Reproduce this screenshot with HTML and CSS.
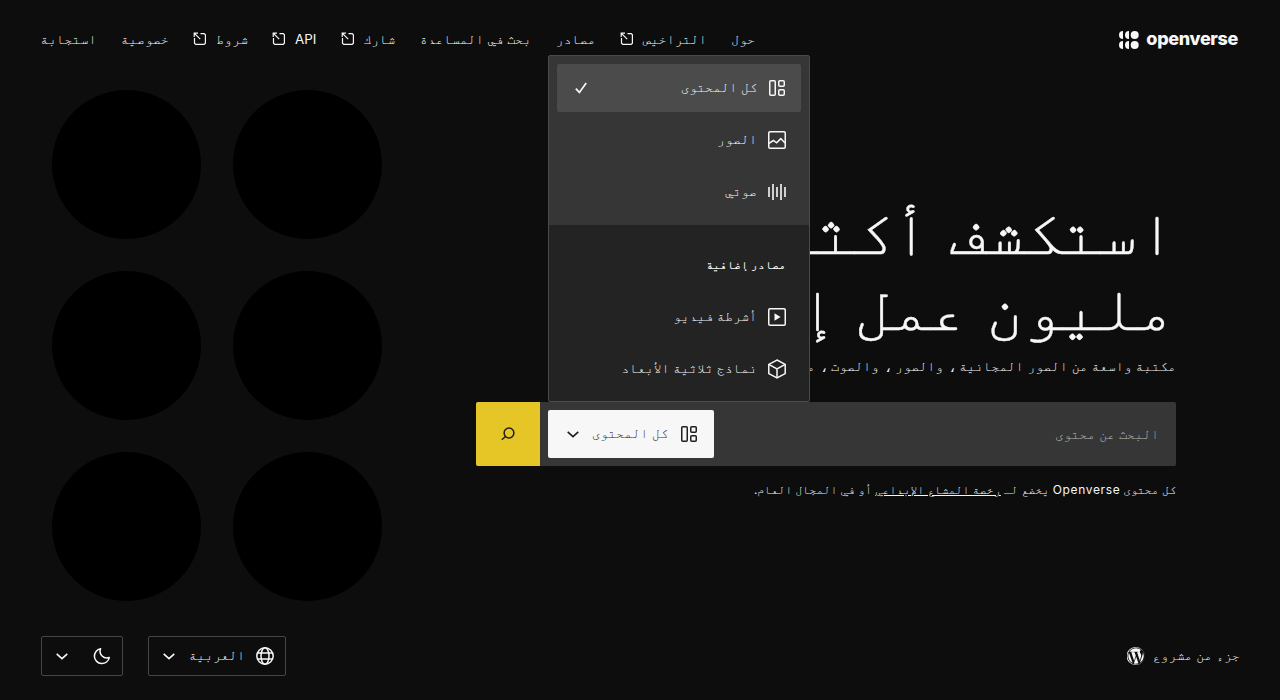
FILE: index.html
```html
<!DOCTYPE html>
<html lang="ar" dir="rtl">
<head>
<meta charset="utf-8">
<title>Openverse</title>
<link rel="stylesheet" href="styles.css">
</head>
<body>
<svg class="defs" width="0" height="0">
  <symbol id="ext" viewBox="0 0 14 14"><g fill="none" stroke="currentColor" stroke-width="1.2"><path d="M1.5 6V11.2L2.8 12.4H11.2L12.4 11.2V2.8L11.2 1.6H7.5"/><path d="M1.2 5V1.2H5M1.2 1.2L7.2 7.2"/></g></symbol>
  <symbol id="all" viewBox="0 0 18 18"><g fill="none" stroke="currentColor" stroke-width="1.5"><rect x="1.75" y="1.75" width="5.5" height="14.5" rx="1"/><rect x="10.75" y="1.75" width="5.5" height="5.5" rx="1"/><rect x="10.75" y="10.75" width="5.5" height="5.5" rx="1"/></g></symbol>
  <symbol id="down" viewBox="0 0 12 7"><path d="M.7 .8L6 5.6L11.3 .8" fill="none" stroke="currentColor" stroke-width="1.6"/></symbol>
</svg>
<div class="page">
  <header class="header">
    <div class="logo">
      <svg width="20" height="18" viewBox="0 0 20 18" fill="currentColor"><circle cx="15.7" cy="4" r="4"/><circle cx="15.7" cy="14" r="4"/><path d="M4 0V8A4 4 0 0 1 4 0ZM10 0V8A4 4 0 0 1 10 0ZM4 10V18A4 4 0 0 1 4 10ZM10 10V18A4 4 0 0 1 10 10Z"/></svg>
      <span class="wordmark">openverse</span>
    </div>
    <nav class="nav">
      <a>حول</a>
      <a>التراخيص<svg><use href="#ext"/></svg></a>
      <a>مصادر</a>
      <a>بحث في المساعدة</a>
      <a>شارك<svg><use href="#ext"/></svg></a>
      <a>API<svg><use href="#ext"/></svg></a>
      <a>شروط<svg><use href="#ext"/></svg></a>
      <a>خصوصية</a>
      <a>استجابة</a>
    </nav>
  </header>
  <main class="main">
    <section class="hero">
      <h1 class="title">استكشف أكثر من<br>مليون عمل إبداعي</h1>
      <p class="subtitle">مكتبة واسعة من الصور المجانية ، والصور ، والصوت ، متاحة للاستخدام</p>
      <div class="search">
        <div class="field">البحث عن محتوى</div>
        <div class="switcher">
          <svg class="i18"><use href="#all"/></svg><span>كل المحتوى</span><svg class="chev"><use href="#down"/></svg>
          <div class="menu">
            <div class="group primary">
              <div class="item selected"><svg class="i18"><use href="#all"/></svg><span>كل المحتوى</span><svg class="check" viewBox="0 0 12 12"><path d="M.8 6.6L4.4 10.4L11.2 1" fill="none" stroke="currentColor" stroke-width="1.7"/></svg></div>
              <div class="item"><svg class="i18" viewBox="0 0 18 18"><g fill="none" stroke="currentColor" stroke-width="1.5"><rect x=".75" y=".75" width="16.5" height="16.5" rx="1.2"/><path d="M1 12.4L5.4 9.5L8.6 11.8L12.8 7.6L17 12"/></g></svg><span>الصور</span></div>
              <div class="item"><svg class="i18" viewBox="0 0 18 18"><path d="M1 4V14M5 1V17M9 4V14M13 1V17M17 4V14" stroke="currentColor" stroke-width="1.6"/></svg><span>صوتي</span></div>
            </div>
            <div class="group">
              <h2 class="heading">مصادر إضافية</h2>
              <div class="item"><svg class="i18" viewBox="0 0 18 18"><rect x=".75" y=".75" width="16.5" height="16.5" rx="1.2" fill="none" stroke="currentColor" stroke-width="1.5"/><path d="M6.5 5.3L12.6 9L6.5 12.7Z" fill="currentColor"/></svg><span>أشرطة فيديو</span></div>
              <div class="item"><svg class="i18 cube" viewBox="0 0 18 20"><g fill="none" stroke="currentColor" stroke-width="1.5"><path d="M9 1L17.2 5.4V14.6L9 19L.8 14.6V5.4Z"/><path d="M.8 5.4L9 10L17.2 5.4M9 10V19"/></g></svg><span>نماذج ثلاثية الأبعاد</span></div>
            </div>
          </div>
        </div>
        <div class="go"><svg width="14" height="14" viewBox="0 0 14 14"><g fill="none" stroke="currentColor" stroke-width="1.5"><circle cx="8" cy="6" r="4.9"/><path d="M4.5 9.5L.8 12.8"/></g></svg></div>
      </div>
      <p class="note">كل محتوى <span class="brand">Openverse</span> يخضع لـ <a>رخصة المشاع الإبداعي</a> أو في المجال العام.</p>
    </section>
    <section class="circles"><i></i><i></i><i></i><i></i><i></i><i></i></section>
  </main>
  <footer class="footer">
    <div class="project"><span>جزء من مشروع</span>
      <svg width="18" height="18" viewBox="0 0 122.5 122.5" fill="currentColor"><path d="M8.7 61.3c0 20.8 12.1 38.7 29.6 47.3L13.3 39.9c-2.900 6.500-4.600 13.700-4.600 21.400zM96.700 58.600c0-6.500-2.300-11-4.300-14.500-2.700-4.300-5.200-8-5.200-12.300 0-4.800 3.700-9.300 8.900-9.300h.7C87.400 13.900 74.900 8.700 61.300 8.700c-18.400 0-34.500 9.400-43.900 23.700h3.400c5.500 0 14-.7 14-.7 2.800-.2 3.200 4 .3 4.300 0 0-2.900.3-6 .5l19.100 57 11.500-34.500-8.200-22.500c-2.800-.2-5.500-.5-5.500-.5-2.800-.2-2.500-4.500.3-4.300 0 0 8.700.7 13.900.7 5.500 0 14.100-.7 14.100-.7 2.800-.2 3.200 4 .3 4.300 0 0-2.900.3-6 .5l19 56.500 5.200-17.500c2.300-7.300 4-12.500 4-17zM62.200 65.900l-15.800 45.800c4.700 1.400 9.700 2.200 14.900 2.200 6.100 0 12-1.100 17.500-3l-.4-.7zM107.400 36c.2 1.700.4 3.500.4 5.400 0 5.300-1 11.300-4 18.800l-16.100 46.500c15.700-9.100 26.200-26.100 26.200-45.500 0-9.100-2.300-17.700-6.500-25.200zM61.300 0a61.300 61.300 0 1 0 0 122.500A61.300 61.300 0 0 0 61.300 0zm0 119.700a58.500 58.500 0 1 1 0-117 58.500 58.500 0 0 1 0 117z"/></svg>
    </div>
    <div class="controls">
      <div class="select language"><svg width="18" height="18" viewBox="0 0 18 18"><g fill="none" stroke="currentColor" stroke-width="1.5"><circle cx="9" cy="9" r="8.200"/><ellipse cx="9" cy="9" rx="4" ry="8.200"/><path d="M1.500 6H16.500M1.500 12H16.500"/></g></svg><span>العربية</span><svg class="chev"><use href="#down"/></svg></div>
      <div class="select theme"><svg width="18" height="18" viewBox="0 0 18 18"><path d="M7.600 1.700A7.500 7.500 0 1 0 16.300 10.400A6.700 6.700 0 0 1 7.600 1.700Z" fill="none" stroke="currentColor" stroke-width="1.5" stroke-linejoin="round"/></svg><svg class="chev"><use href="#down"/></svg></div>
    </div>
  </footer>
</div>
</body>
</html>
```
FILE: styles.css
```css
* { box-sizing: border-box; }
body { margin: 0; background: #0d0d0d; color: #f7f7f7; font: 13.33px/20px Inter, FreeMono, "DejaVu Sans Mono", monospace; overflow: hidden; }
h1, h2, p { margin: 0; font-weight: 400; }
svg { flex: none; display: block; }
.defs { position: absolute; }
.page { height: 700px; display: flex; flex-direction: column; }
.header { height: 80px; padding: 0 42px 0 40.500px; display: flex; align-items: center; justify-content: space-between; }
.logo { direction: ltr; display: flex; align-items: center; gap: 7px; }
.wordmark { font-size: 18px; font-weight: 800; letter-spacing: -.35px; line-height: 20px; padding-bottom: 2px; }
.nav { display: flex; gap: 24.500px; white-space: nowrap; padding-bottom: 2px; }
.nav a { display: flex; align-items: center; gap: 8.500px; }
.nav svg { width: 14px; height: 14px; }
.main { height: 532px; display: flex; justify-content: space-between; padding: 10px 104px 0 52px; }
.hero { width: 700px; padding-top: 104px; }
.title { font-size: 63.3px; line-height: 75.500px; font-weight: 400; -webkit-text-stroke: .4px currentColor; white-space: nowrap; }
.subtitle { font-size: 13.4px; line-height: 20px; word-spacing: .2px; margin-top: 11px; white-space: nowrap; }
.search { height: 64px; margin-top: 26px; display: flex; background: #363636; border-radius: 2px; }
.field { flex: 1; padding: 22px 17px; color: #b8b8b8; }
.switcher { position: relative; width: 166px; height: 48px; margin: 8px 0 8px 8px; background: #f7f7f7; color: #1f1f1f; border-radius: 2px; display: flex; align-items: center; padding: 0 16px; gap: 12px; white-space: nowrap; }
.switcher > span, .item span, .project span, .select span { padding-bottom: 2px; }
.i18 { width: 18px; height: 18px; }
.cube { height: 20px; }
.chev { width: 12px; height: 7px; margin-right: auto; margin-left: 3px; }
.menu { position: absolute; left: 0; bottom: 56px; width: 262px; height: 347px; background: #232323; color: #f7f7f7; border: 1px solid #4a4a4a; border-radius: 2px; }
.group { padding: 8px; }
.primary { background: #363636; height: 169px; }
.item { display: flex; align-items: center; height: 48px; padding: 0 15px; gap: 11px; margin-bottom: 4px; border-radius: 2px; }
.selected { background: #4b4b4b; }
.check { width: 12px; height: 12px; margin-right: auto; margin-left: 3px; }
.heading { font-size: 11.700px; font-weight: 600; line-height: 20px; padding: 22px 15px 18px; }
.go { width: 64px; background: #e6c526; color: #1f1f1f; border-radius: 2px 0 0 2px; display: grid; place-items: center; }
.note { font-size: 11.67px; line-height: 20px; margin-top: 14px; }
.brand { font-size: 12px; letter-spacing: .67px; }
.note a { text-decoration: underline; }
.circles { display: grid; grid-template-columns: 149px 149px; grid-auto-rows: 149px; gap: 32px; }
.circles i { border-radius: 50%; background: #000; }
.footer { height: 88px; padding: 0 40px 0 41px; display: flex; justify-content: space-between; align-items: center; }
.project, .controls { display: flex; align-items: center; gap: 8px; }
.controls { gap: 25px; }
.select { height: 40px; border: 1px solid #454545; border-radius: 2px; display: flex; align-items: center; padding: 0 11px; gap: 11px; }
.language { width: 138px; }
.theme { width: 82px; }
```
